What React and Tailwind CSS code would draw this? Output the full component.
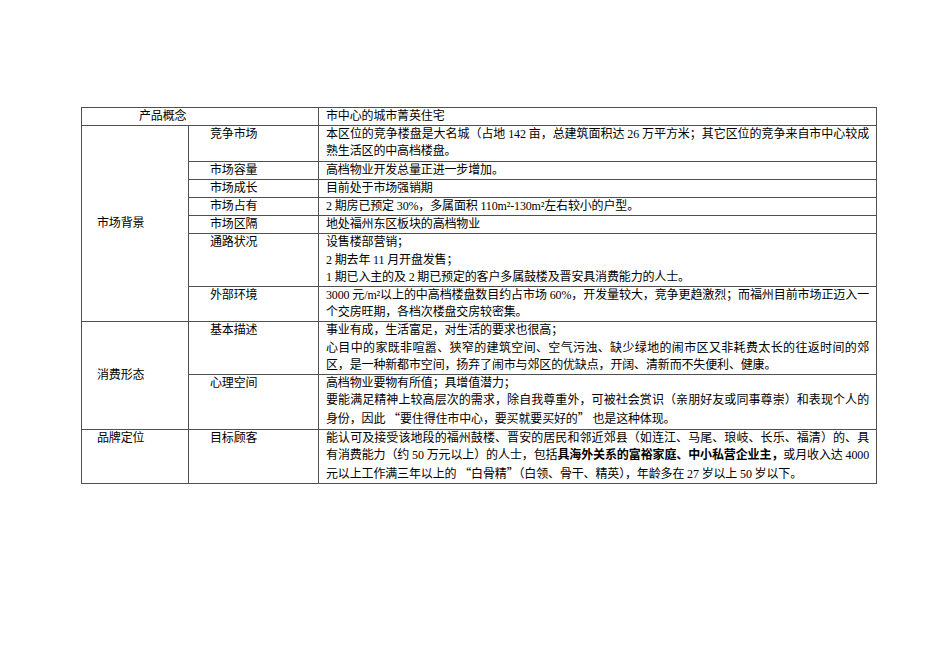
import React from 'react';

const font = "font-['Liberation_Serif','Noto_Sans_CJK_SC',serif]";
const cell = 'border border-[#505050] align-top p-0';

const Q = ({ children }) => (
  <span className="font-['Noto_Sans_CJK_SC'] [font-feature-settings:'fwid']">{children}</span>
);

// a full line is stretched to the cell width, like Word's justified paragraphs
const Full = ({ children }) => (
  <div className="whitespace-nowrap text-justify [text-align-last:justify]">{children}</div>
);
const Last = ({ children }) => <div className="whitespace-nowrap">{children}</div>;

const rows = [
  {
    group: '市场背景',
    span: 7,
    label: '竞争市场',
    body: (
      <>
        <Full>本区位的竞争楼盘是大名城（占地 142 亩，总建筑面积达 26 万平方米；其它区位的竞争来自市中心较成</Full>
        <Last>熟生活区的中高档楼盘。</Last>
      </>
    ),
  },
  { label: '市场容量', body: <Last>高档物业开发总量正进一步增加。</Last> },
  { label: '市场成长', body: <Last>目前处于市场强销期</Last> },
  { label: '市场占有', body: <Last>2 期房已预定 30%，多属面积 110m²-130m²左右较小的户型。</Last> },
  { label: '市场区隔', body: <Last>地处福州东区板块的高档物业</Last> },
  {
    label: '通路状况',
    grayTop: true,
    body: (
      <>
        <Last>设售楼部营销；</Last>
        <Last>2 期去年 11 月开盘发售；</Last>
        <Last>1 期已入主的及 2 期已预定的客户多属鼓楼及晋安具消费能力的人士。</Last>
      </>
    ),
  },
  {
    label: '外部环境',
    body: (
      <>
        <Full>3000 元/m²以上的中高档楼盘数目约占市场 60%，开发量较大，竞争更趋激烈；而福州目前市场正迈入一</Full>
        <Last>个交房旺期，各档次楼盘交房较密集。</Last>
      </>
    ),
  },
  {
    group: '消费形态',
    span: 2,
    label: '基本描述',
    body: (
      <>
        <Last>事业有成，生活富足，对生活的要求也很高；</Last>
        <Full>心目中的家既非喧嚣、狭窄的建筑空间、空气污浊、缺少绿地的闹市区又非耗费太长的往返时间的郊</Full>
        <Last>区，是一种新都市空间，扬弃了闹市与郊区的优缺点，开阔、清新而不失便利、健康。</Last>
      </>
    ),
  },
  {
    label: '心理空间',
    body: (
      <>
        <Last>高档物业要物有所值；具增值潜力；</Last>
        <Full>要能满足精神上较高层次的需求，除自我尊重外，可被社会赏识（亲朋好友或同事尊崇）和表现个人的</Full>
        <Last>
          身份，因此 <Q>“</Q>要住得住市中心，要买就要买好的<Q>”</Q> 也是这种体现。
        </Last>
      </>
    ),
  },
];

export default function App() {
  return (
    <div className={`min-h-[672px] bg-white pt-[107px] pl-[81px] text-[12px] leading-[17.2px] tracking-[-0.15px] text-black ${font}`}>
      <table className="w-[795px] table-fixed border-collapse">
        <colgroup>
          <col className="w-[107px]" />
          <col className="w-[130px]" />
          <col className="w-[558px]" />
        </colgroup>
        <tbody>
          <tr>
            <td colSpan={2} className={`${cell} pl-[57px]`}>
              产品概念
            </td>
            <td className={`${cell} px-[7px]`}>市中心的城市菁英住宅</td>
          </tr>
          {rows.map((row) => (
            <tr key={row.label}>
              {row.group && (
                <td rowSpan={row.span} className={`${cell} !align-middle pl-[15px]`}>
                  {row.group}
                </td>
              )}
              <td className={`${cell} pl-[21px] ${row.grayTop ? 'border-t-[#a0a0a0]' : ''}`}>{row.label}</td>
              <td className={`${cell} px-[7px] ${row.grayTop ? 'border-t-[#a0a0a0]' : ''}`}>{row.body}</td>
            </tr>
          ))}
          <tr>
            <td className={`${cell} pl-[15px]`}>品牌定位</td>
            <td className={`${cell} pl-[21px]`}>目标顾客</td>
            <td className={`${cell} px-[7px]`}>
              <Full>能认可及接受该地段的福州鼓楼、晋安的居民和邻近郊县（如连江、马尾、琅岐、长乐、福清）的、具</Full>
              <Full>
                有消费能力（约 50 万元以上）的人士，包括<b className="font-bold">具海外关系的富裕家庭、中小私营企业主，</b>或月收入达 4000
              </Full>
              <Last>
                元以上工作满三年以上的 <Q>“</Q>白骨精<Q>”</Q>（白领、骨干、精英），年龄多在 27 岁以上 50 岁以下。
              </Last>
            </td>
          </tr>
        </tbody>
      </table>
    </div>
  );
}
